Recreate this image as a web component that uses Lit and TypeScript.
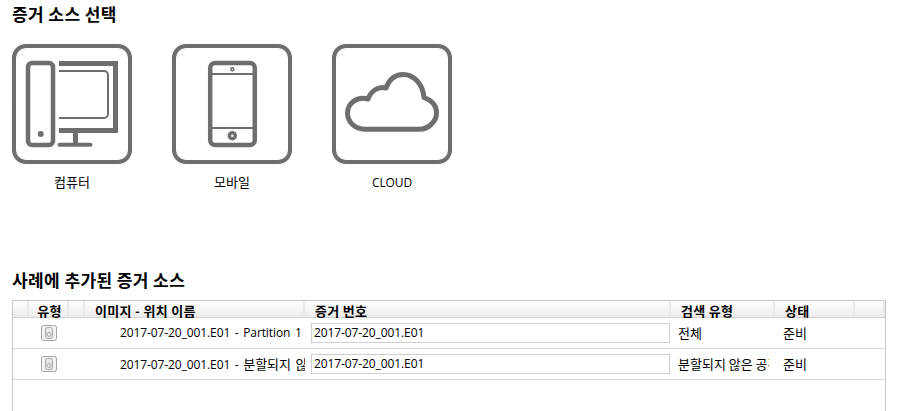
import { LitElement, html, css } from "lit";
import { customElement } from "lit/decorators.js";

const computer = html`<svg viewBox="0 0 120 120" width="120" height="120" fill="none" stroke="#6d6e70">
  <rect x="2" y="2" width="116" height="116" rx="12" stroke-width="4"/>
  <rect x="16" y="19" width="25" height="82" rx="4" stroke-width="4.5"/>
  <circle cx="28.7" cy="90" r="3" fill="#6d6e70" stroke="none"/>
  <path d="M47 19.5H103.5V86.5H47" stroke-width="5"/>
  <path d="M47 27H92a4 4 0 0 1 4 4V70a4 4 0 0 1-4 4H47" stroke-width="2"/>
  <path d="M63.5 87V101" stroke-width="5"/>
  <path d="M47.5 100.7H78.5" stroke-width="4" stroke-linecap="round"/>
</svg>`;

const mobile = html`<svg viewBox="0 0 120 120" width="120" height="120" fill="none" stroke="#6d6e70">
  <rect x="2" y="2" width="116" height="116" rx="12" stroke-width="4"/>
  <rect x="38.2" y="19" width="44.6" height="82" rx="5" stroke-width="4.5"/>
  <path d="M38 30H83M38 84H83" stroke-width="2"/>
  <circle cx="60.3" cy="25.3" r="1.5" stroke-width="1.5"/>
  <circle cx="60.3" cy="91.7" r="3" stroke-width="3.5"/>
</svg>`;

const cloud = html`<svg viewBox="0 0 120 120" width="120" height="120" fill="none" stroke="#6d6e70">
  <rect x="2" y="2" width="116" height="116" rx="12" stroke-width="4"/>
  <path d="M33 85.3H87C97 85.3 104.5 77 104.5 69C104.5 61 99 56 92 53.5C91 40 82 30.5 71 30.5C63 30.5 57 36 54 44C46 42 39 47 36 55C24 52 15.5 60 15.5 69C15.5 78 23 85.3 33 85.3Z" stroke-width="5" stroke-linejoin="round"/>
</svg>`;

const chip = html`<svg class="chip" viewBox="0 0 16 16" width="16" height="16" fill="none">
  <rect x="0.5" y="0.5" width="15" height="15" rx="2" fill="#f2f2f2" stroke="#a4a4a4"/>
  <rect x="4.5" y="2.5" width="7" height="11" rx="2" fill="#e6e6e6" stroke="#a8a8a8"/>
  <circle cx="8" cy="9.5" r="2" stroke="#a8a8a8"/>
</svg>`;

@customElement("app-root")
export class AppRoot extends LitElement {
  static styles = css`
    :host {
      display: block;
      width: 900px;
      height: 411px;
      overflow: hidden;
      background: #fff;
      color: #000;
      font-family: "Open Sans", "Noto Sans CJK KR", sans-serif;
      font-size: 12px;
      letter-spacing: -0.1px;
    }
    .ko { font-size: 13px; letter-spacing: 0; font-family: "Noto Sans CJK KR", sans-serif; }
    h2 {
      margin: 0;
      font-size: 17px;
      font-weight: 700;
      line-height: 20px;
      letter-spacing: 0.4px;
      font-family: "Noto Sans CJK KR", sans-serif;
    }
    .top { padding: 4px 0 0 12px; }
    .sources { display: flex; gap: 40px; margin-top: 20px; }
    .source { width: 120px; display: flex; flex-direction: column; align-items: center; }
    .source svg { display: block; }
    .source span { margin-top: 10px; line-height: 18px; }
    .source span.ko { margin: 9px 0 1px; }
    .bottom { padding: 0 0 0 12px; margin-top: 78px; }
    .table {
      margin-top: 10px;
      width: 872px;
      height: 120px;
      border: solid #c8c8c8;
      border-width: 1px 1px 0 1px;
    }
    .head {
      display: grid;
      grid-template-columns: 16px 40px 16px 220px 366px 104px 80px 1fr;
      grid-template-rows: 16px;
      height: 16px;
      border-bottom: 1px solid #d0d0d0;
      background: linear-gradient(#ffffff, #ececec);
      font-family: "Noto Sans CJK KR", sans-serif;
      font-weight: 700;
      font-size: 13px;
      letter-spacing: 0.3px;
      line-height: 13px;
    }
    .head > div {
      box-sizing: border-box;
      padding-top: 3px;
      border-right: 2px solid #e9e9e9;
      white-space: nowrap;
    }
    .head .t { text-align: center; padding-left: 3px; }
    .head .n { padding-left: 10px; }
    .row {
      display: grid;
      grid-template-columns: 72px 220px 366px 104px 80px 1fr;
      height: 30px;
      border-bottom: 1px solid #d6d6d6;
      align-items: center;
      line-height: 30px;
    }
    .type { display: flex; justify-content: flex-end; padding-right: 28px; }
    .chip { display: block; margin-top: -1px; }
    .name { white-space: nowrap; overflow: hidden; padding-left: 35px; word-spacing: 1.6px; }
    .ev { padding-left: 6px; }
    .ev .box {
      width: 359px;
      height: 20px;
      box-sizing: border-box;
      border: 1px solid #cfcfcf;
      line-height: 18px;
      padding-left: 2px;
    }
    .kind { padding-left: 7px; margin-top: -1px; }
    .status { padding-left: 8px; margin-top: -1px; }
    .clip { width: 91px; white-space: nowrap; overflow: hidden; }
  `;

  private renderRow(name: unknown, kind: string) {
    return html`<div class="row">
      <div class="type">${chip}</div>
      <div class="name">${name}</div>
      <div class="ev"><div class="box">2017-07-20_001.E01</div></div>
      <div class="kind"><div class="clip ko">${kind}</div></div>
      <div class="status ko">준비</div>
      <div></div>
    </div>`;
  }

  render() {
    return html`
      <section class="top">
        <h2>증거 소스 선택</h2>
        <div class="sources">
          <div class="source">${computer}<span class="ko">컴퓨터</span></div>
          <div class="source">${mobile}<span class="ko">모바일</span></div>
          <div class="source">${cloud}<span>CLOUD</span></div>
        </div>
      </section>
      <section class="bottom">
        <h2>사례에 추가된 증거 소스</h2>
        <div class="table">
          <div class="head">
            <div></div>
            <div class="t">유형</div>
            <div></div>
            <div class="n">이미지 - 위치 이름</div>
            <div class="n">증거 번호</div>
            <div class="n">검색 유형</div>
            <div class="n">상태</div>
            <div></div>
          </div>
          ${this.renderRow("2017-07-20_001.E01 - Partition 1", "전체")}
          ${this.renderRow(
            html`2017-07-20_001.E01 - <span class="ko">분할되지 않은 공간</span>`,
            "분할되지 않은 공간"
          )}
        </div>
      </section>
    `;
  }
}
